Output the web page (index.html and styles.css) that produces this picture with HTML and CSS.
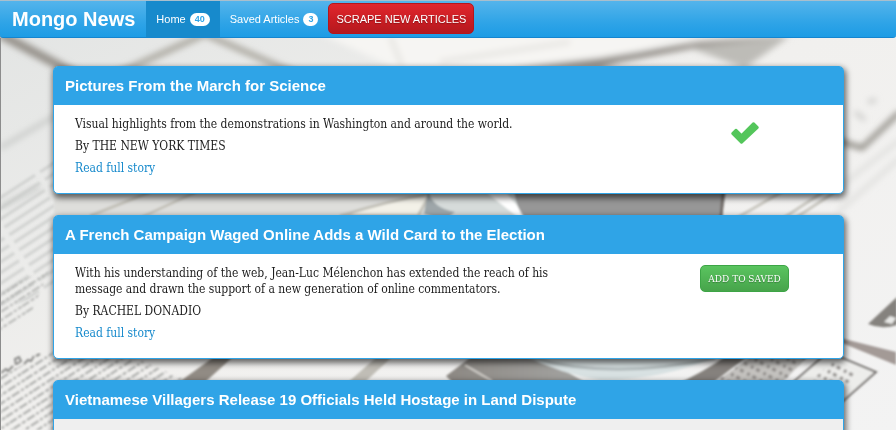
FILE: index.html
```html
<!DOCTYPE html>
<html lang="en">
<head>
<meta charset="utf-8">
<title>Mongo News</title>
<link rel="stylesheet" href="styles.css">
</head>
<body>
<svg class="backdrop" viewBox="0 0 896 430" preserveAspectRatio="xMidYMid slice" aria-hidden="true">
  <defs>
    <filter id="soft" x="-10%" y="-10%" width="120%" height="120%"><feGaussianBlur stdDeviation="3"/></filter>
    <filter id="fine" x="-10%" y="-10%" width="120%" height="120%"><feGaussianBlur stdDeviation="1"/></filter>
    <linearGradient id="paper" x1="0" y1="0" x2="1" y2="1">
      <stop offset="0" stop-color="#e2e4e3"/><stop offset=".5" stop-color="#f1f0ee"/><stop offset="1" stop-color="#f3f3f3"/>
    </linearGradient>
    <linearGradient id="saucer" x1="0" y1="0" x2="1" y2="0">
      <stop offset="0" stop-color="#8c8883"/><stop offset="1" stop-color="#a5a5a3"/>
    </linearGradient>
    <pattern id="print" width="37" height="7" patternUnits="userSpaceOnUse" patternTransform="rotate(-33)">
      <path d="M0 3h8m2 0h4m2 0h9m2 0h3m2 0h4" stroke="#a9aaa8" stroke-width="2"/>
    </pattern>
    <pattern id="rules" width="60" height="9" patternUnits="userSpaceOnUse" patternTransform="rotate(-33)">
      <path d="M0 4h54" stroke="#c7c9c7" stroke-width="3"/>
    </pattern>
    <pattern id="figures" width="14" height="8" patternUnits="userSpaceOnUse" patternTransform="rotate(28)">
      <path d="M1 3h4m4 0h3" stroke="#8b8885" stroke-width="3"/>
    </pattern>
  </defs>
  <rect width="896" height="430" fill="url(#paper)"/>
  <g filter="url(#soft)">
    <path d="M0 34L75 74" stroke="#96928b" stroke-width="9"/>
    <path d="M112 76L205 34L310 80" fill="none" stroke="#aaa79f" stroke-width="6"/>
    <path d="M320 34H690L600 64L400 70Z" fill="#f6f5f3"/>
    <path d="M440 62L570 42M390 36L402 66" stroke="#e4e2de" stroke-width="4"/>
    <path d="M510 68L600 58L700 42L785 36L745 66L700 47L620 62L600 68Z" fill="#8f8a84"/>
    <path d="M690 48L790 36L745 68Z" fill="#bdbcb7"/>
    <path d="M0 148L55 116M0 207L40 187" stroke="#c6c8c6" stroke-width="4"/>
    <path d="M835 140L862 148L900 112" fill="none" stroke="#8c8982" stroke-width="5"/>
    <path d="M838 212L900 158M838 188L900 140" stroke="#dededc" stroke-width="4"/>
    <path d="M868 102l8-2M855 112l10 8" stroke="#c9c9c7" stroke-width="4"/>
  </g>
  <path d="M0 195L55 160V290L0 310Z" fill="url(#rules)" filter="url(#fine)" opacity=".7"/>
  <path d="M0 290L50 268L30 316L0 332Z" fill="url(#print)" filter="url(#fine)" opacity=".8"/>
  <path d="M0 376L54 350L140 360L185 380L54 430H0Z" fill="url(#print)" filter="url(#fine)"/>
  <path d="M1 373l5-4 2 2 5-5m3-1l-1-6 4-2 2 4-4 3m7 0l4-4 3 1 3-5m2 0l4-2" fill="none" stroke="#8a8a88" stroke-width="2" filter="url(#fine)"/>
  <g filter="url(#fine)">
    <path d="M54 194H430V216H54Z" fill="#dededb"/>
    <path d="M90 216L150 192M140 218L200 190M340 216Q390 200 430 194L418 216Z" fill="#f3f1e8" stroke="#c4c2ba" stroke-width="3"/>
    <path d="M425 190H525L522 220H430Z" fill="#d6dbda"/>
    <path d="M428 190Q432 208 455 212L445 220L424 214Z" fill="#9ea6a9"/>
    <path d="M486 192L520 219L528 219L506 192Z" fill="#fff"/>
    <path d="M514 190H726Q724 208 720 220H526Q516 208 514 190Z" fill="#979797"/>
    <path d="M723 192L721 218" stroke="#716b66" stroke-width="3"/>
    <path d="M735 219L785 190M782 219L826 190M794 219L838 190" stroke="#cbc9c2" stroke-width="3"/>
    <path d="M175 385L218 354L236 354L202 385Z" fill="#918b84"/>
    <path d="M345 385L380 354L395 354L362 385Z" fill="#c0bdb6"/>
    <path d="M446 376L475 354H535L590 385H455Z" fill="url(#saucer)"/>
    <path d="M465 365L492 381" stroke="#d6d3ce" stroke-width="2"/>
    <path d="M522 354H725Q660 381 600 380Q560 374 522 354Z" fill="#d8e1e2"/>
    <path d="M530 357Q610 381 715 358" fill="none" stroke="#b3bcbd" stroke-width="3"/>
    <path d="M675 385Q700 374 728 355L748 356L710 385Z" fill="#85817d"/>
    <path d="M715 382L755 354H810L780 385Z" fill="#c4c2bf"/>
    <path d="M715 382L755 354H810L780 385Z" fill="url(#figures)"/>
    <path d="M790 385L828 352L876 372L842 402H790Z" fill="#ededeb" stroke="#74716e" stroke-width="2"/>
    <path d="M810 382L832 362L860 372L840 390Z" fill="url(#figures)"/>
    <path d="M840 338L896 352V365L842 343Z" fill="#a39a96"/>
    <path d="M868 324L897 297V325Q882 330 868 324Z" fill="#85827e"/>
    <path d="M884 322l6-6 6 2-4 6z" fill="#e8e8e6"/>
  </g>
  <path d="M0 38H1V430H0Z" fill="#8c8c8c"/>
</svg>

<nav class="navbar">
  <a class="brand" href="#">Mongo News</a>
  <a class="nav-link active" href="#">Home <span class="badge">40</span></a>
  <a class="nav-link" href="#">Saved Articles <span class="badge">3</span></a>
  <button class="btn btn-danger" type="button">SCRAPE NEW ARTICLES</button>
</nav>

<main class="articles">
  <article class="card">
    <h2 class="card-title">Pictures From the March for Science</h2>
    <div class="card-body">
      <div class="summary">
        <p>Visual highlights from the demonstrations in Washington and around the world.</p>
        <p>By THE NEW YORK TIMES</p>
        <p><a href="#">Read full story</a></p>
      </div>
      <div class="action">
        <svg class="check" viewBox="0 0 30 24" role="img" aria-label="Saved"><path d="M2.5 12.5L6 9L11.500 14.500L23.500 2.500L27.500 6.500L11.500 21.500Z" fill="#54c65b" stroke="#54c65b" stroke-width="2.500" stroke-linejoin="round"/></svg>
      </div>
    </div>
  </article>

  <article class="card">
    <h2 class="card-title">A French Campaign Waged Online Adds a Wild Card to the Election</h2>
    <div class="card-body">
      <div class="summary">
        <p>With his understanding of the web, Jean-Luc Mélenchon has extended the reach of his message and drawn the support of a new generation of online commentators.</p>
        <p>By RACHEL DONADIO</p>
        <p><a href="#">Read full story</a></p>
      </div>
      <div class="action">
        <button class="btn btn-success" type="button">ADD TO SAVED</button>
      </div>
    </div>
  </article>

  <article class="card card-pending">
    <h2 class="card-title">Vietnamese Villagers Release 19 Officials Held Hostage in Land Dispute</h2>
    <div class="card-body"></div>
  </article>
</main>
</body>
</html>
```

FILE: styles.css
```css
* {
  box-sizing: border-box;
}

body {
  display: flex;
  flex-direction: column;
  margin: 0;
  height: 100vh;
  overflow: hidden;
  color: #1c1c1c;
  font: 12px/16px "Roboto Slab", "DejaVu Serif Condensed", "DejaVu Serif", serif;
}

.backdrop {
  position: fixed;
  inset: 0;
  z-index: -1;
  width: 100%;
  height: 100%;
}

.navbar {
  display: flex;
  flex: none;
  align-items: stretch;
  height: 38px;
  padding-left: 12px;
  border-top: 1px solid #a9bfcd;
  border-bottom: 1px solid #1585cf;
  border-radius: 0 0 3px 3px;
  background: linear-gradient(#54b4eb, #2fa4e7 60%, #1d9ce5);
  font-family: "Helvetica Neue", "Liberation Sans", Arial, sans-serif;
}

.brand,
.nav-link {
  display: flex;
  align-items: center;
  color: #fff;
  text-decoration: none;
}

.brand {
  margin-right: 11px;
  font-size: 20px;
  font-weight: bold;
}

.nav-link {
  gap: 4px;
  padding: 0 10px;
  font-size: 11px;
}

.nav-link.active {
  background: #178acc;
}

.badge {
  padding: 0 5px;
  border-radius: 7px;
  background: #fff;
  color: #2fa4e7;
  font-size: 9px;
  font-weight: bold;
  line-height: 13px;
}

.btn {
  border: 1px solid;
  border-radius: 5px;
  color: #fff;
  text-shadow: 0 1px 1px rgba(0, 0, 0, 0.3);
}

.btn-danger {
  align-self: flex-start;
  height: 31px;
  margin-top: 2px;
  padding: 0 7px;
  border-color: #b5161c;
  background: linear-gradient(#e1262d, #c71c22 60%, #b5191f);
  font: 11px "Helvetica Neue", "Liberation Sans", Arial, sans-serif;
}

.btn-success {
  height: 27px;
  padding: 0 7px;
  border-color: #3da546;
  background: linear-gradient(#5ac45f, #47a44b);
  font: 10px "Roboto Slab", "DejaVu Serif Condensed", "DejaVu Serif", serif;
}

.articles {
  display: grid;
  flex: 1;
  align-content: start;
  gap: 21px;
  min-height: 0;
  overflow: hidden;
  padding: 28px 52px 0 53px;
}

.card {
  border: 1px solid #2fa4e7;
  border-radius: 5px;
  background: #fff;
  box-shadow: 1px 3px 6px 1px rgba(0, 0, 0, 0.6);
}

.card-title {
  margin: 0;
  padding: 0 11px;
  border-radius: 3px 3px 0 0;
  background: #2fa4e7;
  color: #fff;
  font: bold 15px/38px "Helvetica Neue", "Liberation Sans", Arial, sans-serif;
}

.card-body {
  display: grid;
  grid-template-columns: 65% 20%;
  justify-content: space-between;
  padding: 11px 24px 11px 21px;
}

.card-pending .card-body {
  border-radius: 0 0 4px 4px;
  background: #efefef;
}

.summary p {
  margin: 0 0 6px;
}

.summary a {
  color: #178acc;
  text-decoration: none;
}

.action {
  text-align: center;
}

.check {
  width: 30px;
  height: 24px;
  margin-top: 5px;
}
```
